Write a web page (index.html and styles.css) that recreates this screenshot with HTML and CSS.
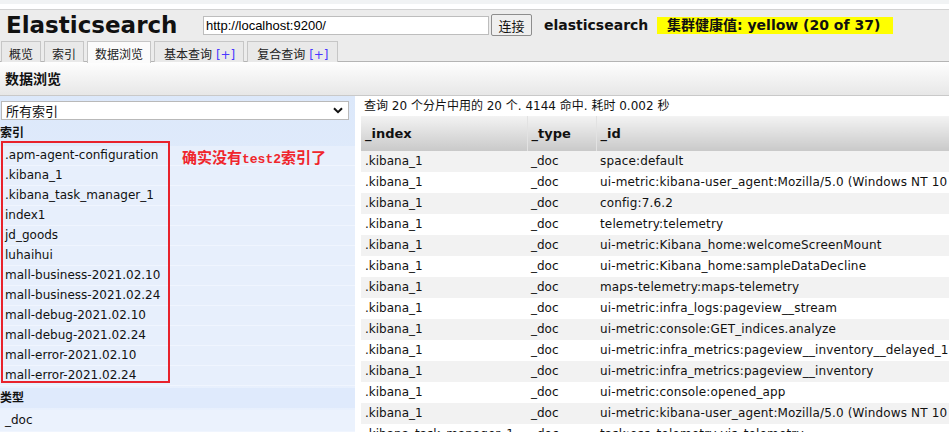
FILE: index.html
```html
<!DOCTYPE html>
<html lang="zh">
<head>
<meta charset="utf-8">
<title>Elasticsearch Head</title>
<link rel="stylesheet" href="styles.css">
</head>
<body>
<div class="chrome"></div>
<header class="top">
  <div class="bar">
    <h1 class="logo">Elasticsearch</h1>
    <input class="url" type="text" value="http://localhost:9200/">
    <button class="connect">连接</button>
    <span class="cluster">elasticsearch</span>
    <span class="health">集群健康值: yellow (20 of 37)</span>
  </div>
  <nav class="tabs">
    <span class="tab">概览</span>
    <span class="tab">索引</span>
    <span class="tab active">数据浏览</span>
    <span class="tab">基本查询 <span class="plus">[+]</span></span>
    <span class="tab">复合查询 <span class="plus">[+]</span></span>
  </nav>
</header>
<div class="section-title">数据浏览</div>
<main class="browser">
  <aside class="side">
    <div class="select-wrap">
      <select class="select"><option>所有索引</option></select>
      <svg class="chev" width="10" height="7" viewBox="0 0 10 7"><path d="M1 1.2 L5 5.2 L9 1.2" fill="none" stroke="#111" stroke-width="2"/></svg>
    </div>
    <div class="side-head">索引</div>
    <ul class="list">
      <li>.apm-agent-configuration</li>
      <li>.kibana_1</li>
      <li>.kibana_task_manager_1</li>
      <li>index1</li>
      <li>jd_goods</li>
      <li>luhaihui</li>
      <li>mall-business-2021.02.10</li>
      <li>mall-business-2021.02.24</li>
      <li>mall-debug-2021.02.10</li>
      <li>mall-debug-2021.02.24</li>
      <li>mall-error-2021.02.10</li>
      <li>mall-error-2021.02.24</li>
    </ul>
    <div class="side-head types">类型</div>
    <ul class="list single">
      <li>_doc</li>
    </ul>
    <div class="redbox"></div>
    <div class="note">确实没有<span class="mono">test2</span>索引了</div>
  </aside>
  <section class="results">
    <div class="status">查询 20 个分片中用的 20 个. 4144 命中. 耗时 0.002 秒</div>
    <table class="grid">
      <thead>
        <tr><th class="c-index">_index</th><th class="c-type">_type</th><th class="c-id">_id</th></tr>
      </thead>
      <tbody>
        <tr><td>.kibana_1</td><td>_doc</td><td>space:default</td></tr>
        <tr><td>.kibana_1</td><td>_doc</td><td>ui-metric:kibana-user_agent:Mozilla/5.0 (Windows NT 10</td></tr>
        <tr><td>.kibana_1</td><td>_doc</td><td>config:7.6.2</td></tr>
        <tr><td>.kibana_1</td><td>_doc</td><td>telemetry:telemetry</td></tr>
        <tr><td>.kibana_1</td><td>_doc</td><td>ui-metric:Kibana_home:welcomeScreenMount</td></tr>
        <tr><td>.kibana_1</td><td>_doc</td><td>ui-metric:Kibana_home:sampleDataDecline</td></tr>
        <tr><td>.kibana_1</td><td>_doc</td><td>maps-telemetry:maps-telemetry</td></tr>
        <tr><td>.kibana_1</td><td>_doc</td><td>ui-metric:infra_logs:pageview__stream</td></tr>
        <tr><td>.kibana_1</td><td>_doc</td><td>ui-metric:console:GET_indices.analyze</td></tr>
        <tr><td>.kibana_1</td><td>_doc</td><td>ui-metric:infra_metrics:pageview__inventory__delayed_1</td></tr>
        <tr><td>.kibana_1</td><td>_doc</td><td>ui-metric:infra_metrics:pageview__inventory</td></tr>
        <tr><td>.kibana_1</td><td>_doc</td><td>ui-metric:console:opened_app</td></tr>
        <tr><td>.kibana_1</td><td>_doc</td><td>ui-metric:kibana-user_agent:Mozilla/5.0 (Windows NT 10</td></tr>
        <tr><td>.kibana_task_manager_1</td><td>_doc</td><td>task:oss_telemetry-vis_telemetry</td></tr>
      </tbody>
    </table>
  </section>
</main>
</body>
</html>
```
FILE: styles.css
```css
html, body {
  margin: 0;
  padding: 0;
  width: 949px;
  height: 432px;
  overflow: hidden;
  background: #fff;
  font-family: "DejaVu Sans", Verdana, "Noto Sans CJK SC", sans-serif;
  font-size: 12px;
  color: #111;
}

.chrome {
  height: 4px;
  background: #f1f3f4;
  border-bottom: 5px solid #fff;
}

.top {
  background: #ececec;
  border-top: 1px solid #d2d2d2;
  height: 53px;
  box-sizing: border-box;
  border-bottom: 1px solid #b4b4b4;
}

.bar {
  display: flex;
  align-items: center;
  height: 30px;
  padding-left: 6px;
}

.logo {
  margin: 0 27px 0 0;
  font-size: 23px;
  font-weight: bold;
  line-height: 30px;
  color: #111;
  width: 170px;
  white-space: nowrap;
}

.url {
  width: 286px;
  height: 19px;
  box-sizing: border-box;
  border: 1px solid #bdbdbd;
  background: #fff;
  font-family: "Liberation Sans", Arial, sans-serif;
  font-size: 13px;
  padding: 0 2px;
  margin: 0 2px 0 0;
  color: #000;
}

.connect {
  width: 41px;
  height: 22px;
  margin: 0;
  border: 1px solid #8d8d8d;
  border-radius: 2px;
  background: #efefef;
  font-family: "Noto Sans CJK SC", sans-serif;
  font-size: 13px;
  padding: 0;
  color: #111;
}

.cluster {
  margin-left: 12px;
  font-size: 14px;
  font-weight: bold;
  width: 101px;
}

.health {
  margin-left: 12px;
  background: #ffff00;
  width: 236px;
  height: 17px;
  box-sizing: border-box;
  padding-left: 10px;
  font-size: 14px;
  font-weight: bold;
  line-height: 17px;
  white-space: nowrap;
}

.tabs {
  display: flex;
  gap: 3px;
  padding-left: 1px;
  margin-top: 1px;
  height: 20px;
}

.tab {
  height: 21px;
  box-sizing: border-box;
  border: 1px solid #c6c6c6;
  border-bottom: none;
  background: #e9e9e9;
  padding: 6px 7px 0;
  line-height: 14px;
  font-size: 12px;
  color: #222;
  white-space: nowrap;
}

.tab.active {
  background: #fbfbfb;
  height: 22px;
  position: relative;
  z-index: 1;
}

.plus {
  color: #4a38ff;
}

.tab:nth-child(4), .tab:nth-child(5) {
  padding: 6px 8px 0 9px;
}

.section-title {
  height: 34px;
  box-sizing: border-box;
  border-bottom: 1px solid #c9c9c9;
  background: linear-gradient(#fefefe, #e7e7e7);
  font-size: 14px;
  font-weight: bold;
  line-height: 35px;
  padding-left: 5px;
}

.browser {
  display: flex;
  height: 336px;
}

.side {
  position: relative;
  width: 355px;
  flex: none;
  background: linear-gradient(#dce8fa, #e6effd 60%, #e8f0fd);
  padding-top: 5px;
  box-sizing: border-box;
}

.select-wrap {
  position: relative;
  width: 348px;
  margin-left: 1px;
}

.select {
  appearance: none;
  -webkit-appearance: none;
  width: 348px;
  height: 19px;
  box-sizing: border-box;
  border: 1px solid #b9b9b9;
  border-radius: 0;
  background: #fff;
  font-family: "Noto Sans CJK SC", sans-serif;
  font-size: 13px;
  padding: 0 4px;
  line-height: 17px;
  color: #111;
  display: block;
}

.chev {
  position: absolute;
  right: 6px;
  top: 6px;
}

.side-head {
  margin-top: 3px;
  height: 20px;
  line-height: 20px;
  font-weight: bold;
  font-size: 12px;
  color: #111;
}

.side-head.types {
  margin-top: 2px;
  background: #dfeafc;
}

.list {
  list-style: none;
  margin: 0;
  padding: 3px 0 0;
}

.list li {
  height: 20px;
  line-height: 19px;
  box-sizing: border-box;
  border-bottom: 1px solid #f0f5fe;
  background: #e7effc;
  padding-left: 5px;
  font-size: 12px;
  white-space: nowrap;
}

.list.single {
  padding-top: 2px;
}

.list.single li {
  background: #ebf2fd;
  line-height: 21px;
  height: 22px;
}

.redbox {
  position: absolute;
  left: 1px;
  top: 45px;
  width: 169px;
  height: 242px;
  box-sizing: border-box;
  border: 2px solid #e8222b;
}

.note {
  position: absolute;
  left: 182px;
  top: 52px;
  color: #f0262c;
  font-family: "Noto Sans CJK SC", sans-serif;
  font-weight: bold;
  font-size: 15px;
  line-height: 18px;
  white-space: nowrap;
}

.mono {
  font-family: "Liberation Mono", "DejaVu Sans Mono", monospace;
  font-size: 13px;
}

.results {
  flex: 1;
  min-width: 0;
  overflow: hidden;
  padding-left: 6px;
}

.status {
  height: 20px;
  line-height: 20px;
  padding-left: 3px;
  font-size: 12px;
  white-space: nowrap;
}

.grid {
  border-collapse: collapse;
  width: 820px;
  table-layout: fixed;
  white-space: nowrap;
}

.grid th {
  height: 35px;
  padding: 0 4px;
  text-align: left;
  font-size: 13px;
  font-weight: bold;
  background: linear-gradient(#f3f3f3, #c9c9c9);
  border-left: 1px solid #e2e2e2;
  box-sizing: border-box;
}

.grid th:first-child {
  border-left: none;
}

.c-index { width: 166px; }
.c-type { width: 69px; }

.grid td {
  height: 21px;
  padding: 0 4px;
  line-height: 21px;
  font-size: 12px;
  overflow: hidden;
}

.grid td:nth-child(3) {
  letter-spacing: 0.15px;
}

.grid tbody tr:nth-child(odd) td {
  background: #f2f2f2;
}
```
